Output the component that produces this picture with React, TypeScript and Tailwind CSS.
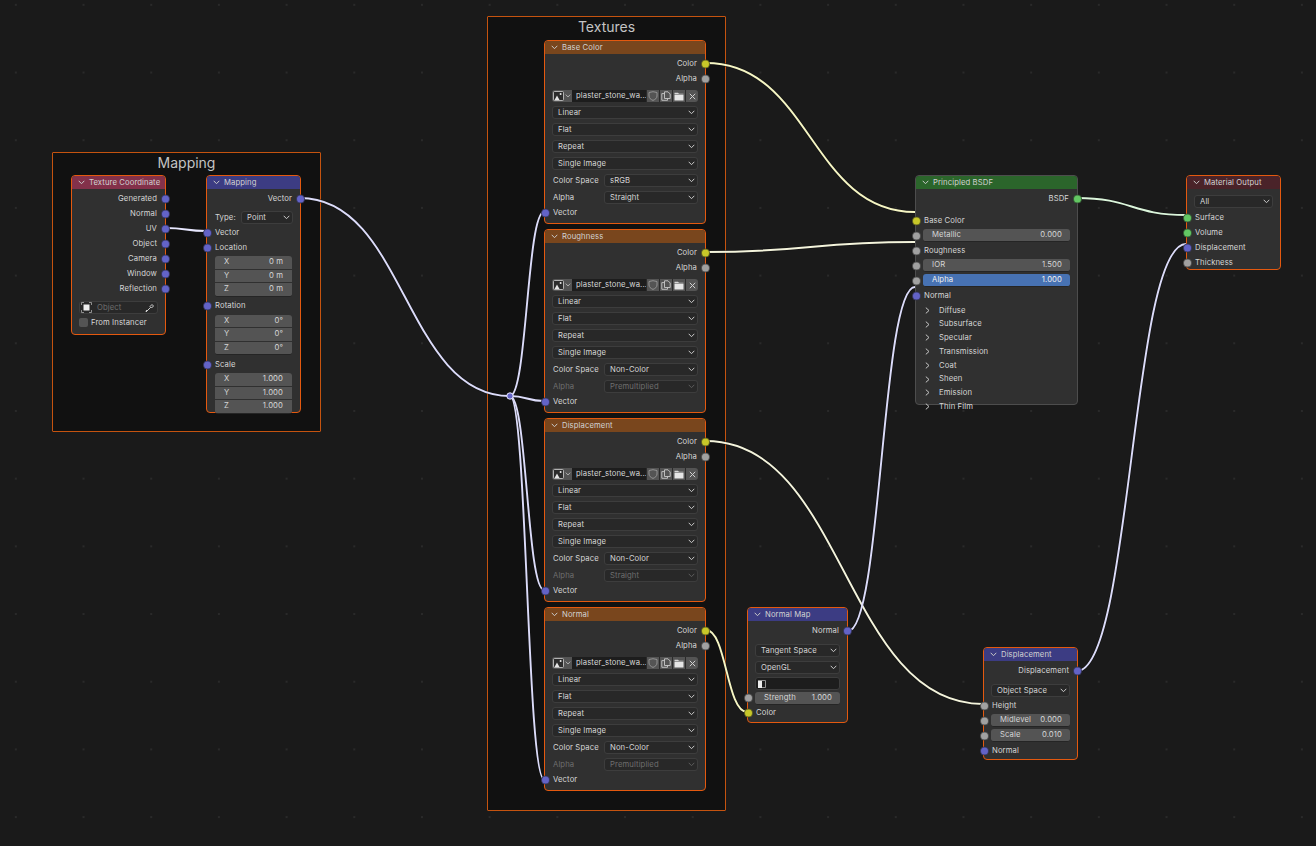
import React from "react";

const Chevron = ({ className = "text-[#c8c8c8]" }: { className?: string }) => (
  <svg width="7" height="5" viewBox="0 0 7 5" className={`shrink-0 ${className}`} fill="none" stroke="currentColor" strokeWidth="1">
    <path d="M0.7 0.8 3.5 3.7 6.3 0.8" />
  </svg>
);

const SOCKET = {
  vector: "bg-[#6363c7]",
  color: "bg-[#c7c729]",
  value: "bg-[#a1a1a1]",
  shader: "bg-[#63c763]",
};

type SocketKind = keyof typeof SOCKET;

const Socket = ({ kind, side }: { kind: SocketKind; side: "left" | "right" }) => (
  <span
    className={`absolute top-1/2 -translate-y-1/2 w-[7px] h-[7px] rounded-full border border-[#1d1d1d]/60 box-content z-10 ${SOCKET[kind]} ${
      side === "left" ? "left-[-4.5px]" : "right-[-4.5px]"
    }`}
  />
);

const Output = ({ label, kind, h = 15, pad = 8 }: { label: string; kind: SocketKind; h?: number; pad?: number }) => (
  <div className="relative flex items-center justify-end text-[#d6d6d6]" style={{ height: h, paddingRight: pad }}>
    {label}
    <Socket kind={kind} side="right" />
  </div>
);

const Input = ({ label, kind, h = 15, pad = 8 }: { label: string; kind: SocketKind; h?: number; pad?: number }) => (
  <div className="relative flex items-center text-[#d6d6d6]" style={{ height: h, paddingLeft: pad }}>
    {label}
    <Socket kind={kind} side="left" />
  </div>
);

const Select = ({ label, dim = false, className = "" }: { label: string; dim?: boolean; className?: string }) => (
  <div
    className={`h-[13px] flex items-center justify-between pl-[5px] pr-[2px] rounded-[3px] border border-[#3d3d3d] bg-[#282828] ${
      dim ? "text-[#6e6e6e]" : "text-[#d6d6d6]"
    } ${className}`}
  >
    <span>{label}</span>
    <Chevron className={dim ? "text-[#5c5c5c]" : "text-[#c8c8c8]"} />
  </div>
);

const SelectRow = ({ label }: { label: string }) => (
  <div className="h-[17px] flex items-center px-[7px]">
    <Select label={label} className="w-full" />
  </div>
);

const LabeledSelect = ({ label, value, dim = false }: { label: string; value: string; dim?: boolean }) => (
  <div className="h-[17px] flex items-center pl-[8px] pr-[7px]">
    <span className={`w-[51px] ${dim ? "text-[#6e6e6e]" : "text-[#d6d6d6]"}`}>{label}</span>
    <Select label={value} dim={dim} className="flex-1" />
  </div>
);

const HeaderIcon = ({ children }: { children: React.ReactNode }) => (
  <span className="w-[13px] h-[12px] flex items-center justify-center bg-[#545454] border-l border-[#2a2a2a] text-[#c8c8c8]">
    {children}
  </span>
);

const ImageIcon = () => (
  <svg width="11" height="10" viewBox="0 0 11 10">
    <rect x="0.5" y="0.5" width="10" height="9" rx="1" fill="#2c2c2c" stroke="#cfcfcf" strokeWidth="0.8" />
    <path d="M1.5 9 4 4.5 6.5 9Z" fill="#e6e6e6" />
    <circle cx="7.6" cy="3" r="1" fill="#e6e6e6" />
  </svg>
);

const ImageBar = () => (
  <div className="h-[12px] mt-[4px] mb-[2px] mx-[7px] flex items-stretch">
    <div className="w-[20px] bg-[#545454] rounded-l-[3px] flex items-center gap-[1px] pl-[1px]">
      <ImageIcon />
      <svg width="6" height="4" viewBox="0 0 7 5" fill="none" stroke="#c8c8c8" strokeWidth="1">
        <path d="M0.7 0.8 3.5 3.7 6.3 0.8" />
      </svg>
    </div>
    <div className="flex-1 bg-[#1d1d1d] flex items-center pl-[4px] text-[#d6d6d6] overflow-hidden whitespace-nowrap">
      plaster_stone_wa...
    </div>
    <HeaderIcon>
      <svg width="10" height="10" viewBox="0 0 10 10" fill="none" stroke="#9a9a9a" strokeWidth="0.9">
        <path d="M1 1.5 5 0.7 9 1.5V5C9 7.2 7 8.6 5 9.4 3 8.6 1 7.2 1 5Z" />
      </svg>
    </HeaderIcon>
    <HeaderIcon>
      <svg width="10" height="10" viewBox="0 0 10 10" fill="none" stroke="#c8c8c8" strokeWidth="0.9">
        <path d="M3.5 7.5V0.8H7L9.2 3V7.5ZM3.5 2.6H0.8V9.3H6.5V7.5" />
      </svg>
    </HeaderIcon>
    <HeaderIcon>
      <svg width="10" height="9" viewBox="0 0 10 9">
        <path d="M0.5 0.7H4L5 1.7H9.5V2.5H0.5Z" fill="#d6d6d6" />
        <rect x="0.5" y="3" width="9" height="5.5" fill="#e6e6e6" />
      </svg>
    </HeaderIcon>
    <span className="w-[13px] h-[12px] flex items-center justify-center bg-[#545454] border-l border-[#2a2a2a] rounded-r-[3px]">
      <svg width="7" height="7" viewBox="0 0 7 7" fill="none" stroke="#d0d0d0" strokeWidth="1">
        <path d="M0.8 0.8 6.2 6.2M6.2 0.8 0.8 6.2" />
      </svg>
    </span>
  </div>
);

const Slider = ({ label, value, blue = false, labelPad = 9 }: { label: string; value: string; blue?: boolean; labelPad?: number }) => (
  <div
    className={`h-[13px] flex items-center justify-between pr-[8px] rounded-[3px] border-b border-[#252525] text-[#d6d6d6] ${
      blue ? "bg-[#4772b3] text-[#f0f0f0]" : "bg-[#545454]"
    }`}
    style={{ paddingLeft: labelPad }}
  >
    <span>{label}</span>
    <span>{value}</span>
  </div>
);

const XYZ = ({ values }: { values: string[] }) => (
  <div className="mx-[8px] flex flex-col gap-[1px] rounded-[3px] overflow-hidden border-b border-[#252525]">
    {["X", "Y", "Z"].map((axis, i) => (
      <div key={axis} className="h-[12.5px] bg-[#545454] flex items-center justify-between pl-[9px] pr-[9px] text-[#d6d6d6]">
        <span>{axis}</span>
        <span>{values[i]}</span>
      </div>
    ))}
  </div>
);

const Node = ({
  title,
  header,
  x,
  y,
  w,
  h,
  selected = true,
  children,
}: {
  title: string;
  header: string;
  x: number;
  y: number;
  w: number;
  h: number;
  selected?: boolean;
  children: React.ReactNode;
}) => (
  <div
    className={`absolute rounded-[4px] bg-[#303030] text-[7.7px] leading-none tracking-[0.1px] border ${
      selected ? "border-[#e4590f]" : "border-[#4d4d4d]"
    }`}
    style={{ left: x, top: y, width: w, height: h }}
  >
    <div className={`h-[13px] rounded-t-[3px] flex items-center gap-[4px] pl-[6px] text-[#d2d2d2] ${header}`}>
      <Chevron />
      <span>{title}</span>
    </div>
    {children}
  </div>
);

const TextureNode = ({
  title,
  y,
  colorSpace,
  alpha,
  alphaDim,
}: {
  title: string;
  y: number;
  colorSpace: string;
  alpha: string;
  alphaDim: boolean;
}) => (
  <Node title={title} header="bg-[#79461d]" x={544} y={y} w={162} h={184}>
    <div className="pt-[2px]">
      <Output label="Color" kind="color" />
      <Output label="Alpha" kind="value" />
      <ImageBar />
      <SelectRow label="Linear" />
      <SelectRow label="Flat" />
      <SelectRow label="Repeat" />
      <SelectRow label="Single Image" />
      <LabeledSelect label="Color Space" value={colorSpace} />
      <LabeledSelect label="Alpha" value={alpha} dim={alphaDim} />
      <Input label="Vector" kind="vector" h={13} />
    </div>
  </Node>
);

const Frame = ({ title, x, y, w, h }: { title: string; x: number; y: number; w: number; h: number }) => (
  <div
    className="absolute bg-[#111111] border border-[#c5530f] rounded-[1px] text-center text-[14px] leading-none pt-[3px] text-[#c4c4c4]"
    style={{ left: x, top: y, width: w, height: h }}
  >
    {title}
  </div>
);

const Panel = ({ label }: { label: string }) => (
  <div className="h-[13.75px] flex items-center pl-[9px] gap-[9px] text-[#d6d6d6]">
    <svg width="5" height="7" viewBox="0 0 5 7" fill="none" stroke="#c8c8c8" strokeWidth="1">
      <path d="M0.8 0.6 4 3.5 0.8 6.4" />
    </svg>
    <span>{label}</span>
  </div>
);

const noodle = (x1: number, y1: number, x2: number, y2: number) => {
  const d = Math.abs(x2 - x1) * 0.5;
  return `M${x1} ${y1}C${x1 + d} ${y1} ${x2 - d} ${y2} ${x2} ${y2}`;
};

const WIRES: { d: string; color: string }[] = [
  { d: noodle(166, 228, 206, 231), color: "#e8e8ff" },
  { d: noodle(300, 198, 510, 396), color: "#dcdcfa" },
  { d: noodle(510, 396, 544, 212), color: "#dcdcfa" },
  { d: noodle(510, 396, 544, 401), color: "#dcdcfa" },
  { d: noodle(510, 396, 544, 590), color: "#dcdcfa" },
  { d: noodle(510, 396, 544, 779), color: "#dcdcfa" },
  { d: noodle(706, 63, 915, 212), color: "#f6f6c4" },
  { d: noodle(706, 252, 915, 242), color: "#f4f4dc" },
  { d: noodle(706, 441, 983, 704), color: "#f4f4dc" },
  { d: noodle(706, 630, 747, 712), color: "#f6f6c4" },
  { d: noodle(848, 631, 915, 287), color: "#dcdcfa" },
  { d: noodle(1077, 198, 1186, 215), color: "#dcf6dc" },
  { d: noodle(1077, 671, 1186, 244), color: "#dcdcfa" },
];

const Wires = () => (
  <svg className="absolute inset-0" width={1316} height={846} fill="none">
    {WIRES.map((w, i) => (
      <path key={i} d={w.d} stroke="#111111" strokeOpacity="0.55" strokeWidth="3.4" />
    ))}
    {WIRES.map((w, i) => (
      <path key={i} d={w.d} stroke={w.color} strokeWidth="1.9" />
    ))}
    <circle cx="510" cy="396" r="3.2" fill="#6363c7" stroke="#e8e8ff" strokeWidth="1" />
  </svg>
);

export default function App() {
  return (
    <div
      className="relative w-[1316px] h-[846px] overflow-hidden bg-[#1a1a1a] bg-[radial-gradient(circle,#2a2a2a_0.8px,transparent_1px)] bg-[length:67.7px_67.7px] bg-[position:-18px_-29px]"
      style={{ fontFamily: "Inter, 'DejaVu Sans', sans-serif" }}
    >
      <Frame title="Mapping" x={52} y={152} w={269} h={280} />
      <Frame title="Textures" x={487} y={16} w={239} h={795} />
      <Wires />

      <Node title="Texture Coordinate" header="bg-[#83314a]" x={71} y={175} w={95} h={160}>
        <div className="pt-[2px]">
          <Output label="Generated" kind="vector" />
          <Output label="Normal" kind="vector" />
          <Output label="UV" kind="vector" />
          <Output label="Object" kind="vector" />
          <Output label="Camera" kind="vector" />
          <Output label="Window" kind="vector" />
          <Output label="Reflection" kind="vector" />
          <div className="mt-[5px] mx-[7px] h-[13px] flex items-center justify-between rounded-[3px] border border-[#3d3d3d] bg-[#282828] pl-[1px] pr-[2px] text-[#6e6e6e]">
            <span className="flex items-center gap-[5px]">
              <svg width="11" height="11" viewBox="0 0 11 11" fill="none">
                <rect x="2.5" y="2.5" width="6" height="6" fill="#eeeeee" />
                <path d="M0.5 3V0.5H3M8 0.5H10.5V3M10.5 8V10.5H8M3 10.5H0.5V8" stroke="#a8a8a8" strokeWidth="0.8" />
              </svg>
              Object
            </span>
            <svg width="10" height="10" viewBox="0 0 10 10" fill="none" stroke="#d0d0d0" strokeWidth="1">
              <path d="M1 9 5.6 4.4M7 1.5 8.5 3 6.5 5 5 3.5ZM1 9 1.6 7" />
            </svg>
          </div>
          <div className="mt-[4px] ml-[7px] flex items-center gap-[3px] text-[#d6d6d6]">
            <span className="w-[9px] h-[9px] rounded-[2px] bg-[#545454]" />
            From Instancer
          </div>
        </div>
      </Node>

      <Node title="Mapping" header="bg-[#3c3c83]" x={206} y={175} w={95} h={238}>
        <div className="pt-[2px]">
          <Output label="Vector" kind="vector" />
          <div className="h-[17px] mt-[3px] flex items-center pl-[8px] pr-[7px] text-[#d6d6d6]">
            <span className="w-[26px]">Type:</span>
            <Select label="Point" className="flex-1" />
          </div>
          <Input label="Vector" kind="vector" h={13} />
          <Input label="Location" kind="vector" h={17} />
          <XYZ values={["0 m", "0 m", "0 m"]} />
          <div className="mt-[1px]">
            <Input label="Rotation" kind="vector" h={17} />
          </div>
          <XYZ values={["0°", "0°", "0°"]} />
          <div className="mt-[1px]">
            <Input label="Scale" kind="vector" h={17} />
          </div>
          <XYZ values={["1.000", "1.000", "1.000"]} />
        </div>
      </Node>

      <TextureNode title="Base Color" y={40} colorSpace="sRGB" alpha="Straight" alphaDim={false} />
      <TextureNode title="Roughness" y={229} colorSpace="Non-Color" alpha="Premultiplied" alphaDim />
      <TextureNode title="Displacement" y={418} colorSpace="Non-Color" alpha="Straight" alphaDim />
      <TextureNode title="Normal" y={607} colorSpace="Non-Color" alpha="Premultiplied" alphaDim />

      <Node title="Normal Map" header="bg-[#3c3c83]" x={747} y={607} w={101} h={116}>
        <div className="pt-[2px]">
          <Output label="Normal" kind="vector" />
          <div className="h-[4px]" />
          <SelectRow label="Tangent Space" />
          <SelectRow label="OpenGL" />
          <div className="mx-[7px] h-[13px] mt-[1px] rounded-[3px] border border-[#3d3d3d] bg-[#1d1d1d] flex items-center pl-[1px]">
            <svg width="10" height="10" viewBox="0 0 10 10" fill="none">
              <rect x="1" y="2" width="4" height="7" fill="#eeeeee" />
              <path d="M1 1.5H8.5V8.5H5" stroke="#b0b0b0" strokeWidth="0.8" />
            </svg>
          </div>
          <div className="relative h-[16px] flex items-center px-[7px]">
            <Socket kind="value" side="left" />
            <div className="w-full">
              <Slider label="Strength" value="1.000" />
            </div>
          </div>
          <Input label="Color" kind="color" h={13} />
        </div>
      </Node>

      <Node title="Displacement" header="bg-[#3c3c83]" x={983} y={647} w={95} h={113}>
        <div className="pt-[2px]">
          <Output label="Displacement" kind="vector" />
          <div className="h-[4px]" />
          <SelectRow label="Object Space" />
          <Input label="Height" kind="value" h={14} />
          <div className="relative h-[15px] flex items-center px-[7px]">
            <Socket kind="value" side="left" />
            <div className="w-full">
              <Slider label="Midlevel" value="0.000" />
            </div>
          </div>
          <div className="relative h-[15px] flex items-center px-[7px]">
            <Socket kind="value" side="left" />
            <div className="w-full">
              <Slider label="Scale" value="0.010" />
            </div>
          </div>
          <Input label="Normal" kind="vector" h={15} />
        </div>
      </Node>

      <Node title="Principled BSDF" header="bg-[#2b652b]" x={915} y={175} w={163} h={230} selected={false}>
        <div className="pt-[2px]">
          <Output label="BSDF" kind="shader" />
          <div className="h-[7px]" />
          <Input label="Base Color" kind="color" />
          {[
            ["Metallic", "0.000"],
          ].map(([l, v]) => (
            <div key={l} className="relative h-[15px] flex items-center px-[7px]">
              <Socket kind="value" side="left" />
              <div className="w-full">
                <Slider label={l} value={v} />
              </div>
            </div>
          ))}
          <Input label="Roughness" kind="value" />
          <div className="relative h-[15px] flex items-center px-[7px]">
            <Socket kind="value" side="left" />
            <div className="w-full">
              <Slider label="IOR" value="1.500" />
            </div>
          </div>
          <div className="relative h-[15px] flex items-center px-[7px]">
            <Socket kind="value" side="left" />
            <div className="w-full">
              <Slider label="Alpha" value="1.000" blue />
            </div>
          </div>
          <Input label="Normal" kind="vector" />
          <div className="pt-[0.5px]">
            {["Diffuse", "Subsurface", "Specular", "Transmission", "Coat", "Sheen", "Emission", "Thin Film"].map((p) => (
              <Panel key={p} label={p} />
            ))}
          </div>
        </div>
      </Node>

      <Node title="Material Output" header="bg-[#4a2329]" x={1186} y={175} w={95} h={95}>
        <div className="pt-[4px]">
          <SelectRow label="All" />
          <Input label="Surface" kind="shader" />
          <Input label="Volume" kind="shader" />
          <Input label="Displacement" kind="vector" />
          <Input label="Thickness" kind="value" />
        </div>
      </Node>
    </div>
  );
}
